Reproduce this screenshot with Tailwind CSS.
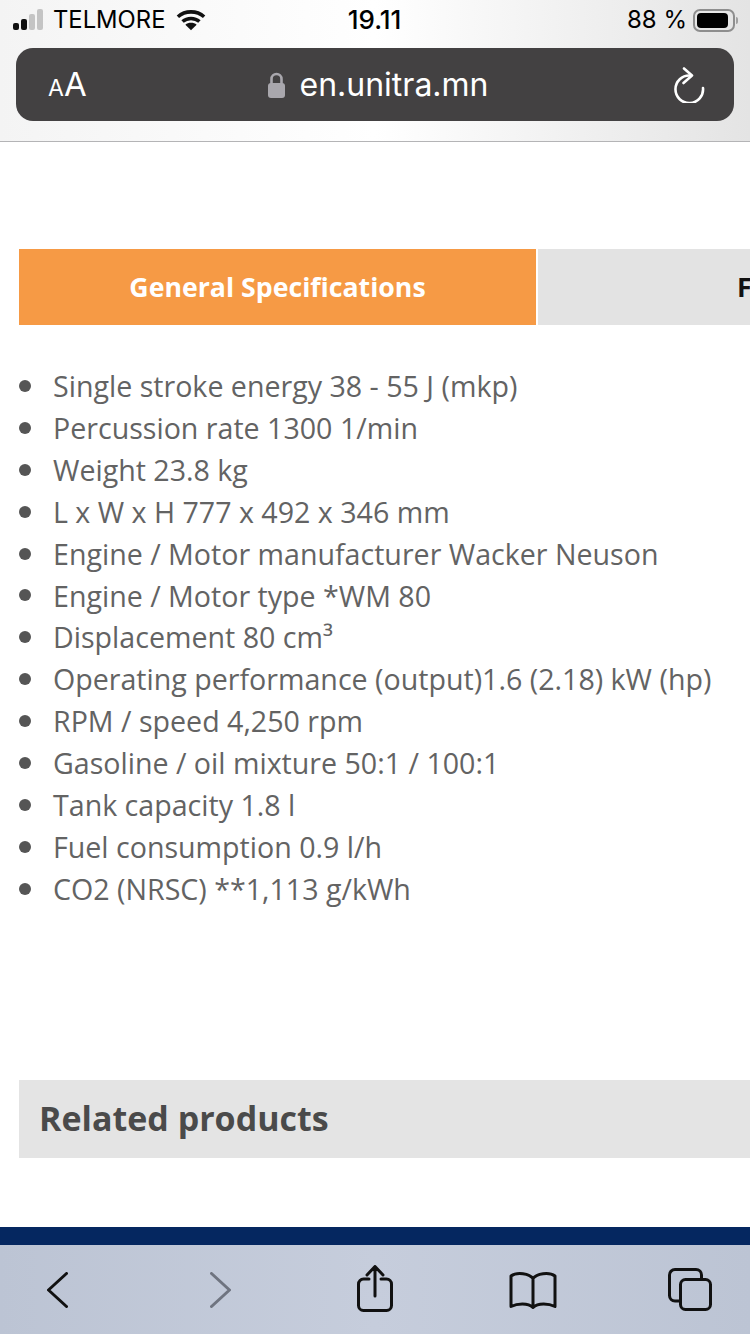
<!DOCTYPE html>
<html lang="en">
<head>
    <meta charset="UTF-8">
    <meta name="viewport" content="width=device-width, initial-scale=1.0">
    <script src="https://cdn.jsdelivr.net/npm/@tailwindcss/browser@4"></script>
    <title>en.unitra.mn</title>
</head>
<body class="bg-white">
<div class="w-[750px] h-[1334px] overflow-hidden flex flex-col font-['Open_Sans',sans-serif]">

    <!-- safari top bar -->
    <header class="h-[142px] shrink-0 border-b border-[#b4b4b6] bg-gradient-to-r from-[#f4f4f4] via-[#ffffff] to-[#e4e4e4] font-['Inter',sans-serif]">
        <div class="h-[40px] mb-[8px] pl-[13px] pr-[12px] grid grid-cols-3 items-center text-black">
            <div class="flex items-center">
                <div class="flex items-end gap-[2px] h-[21px]">
                    <span class="w-[6px] h-[7px] rounded-[2px] bg-[#111]"></span>
                    <span class="w-[6px] h-[11px] rounded-[2px] bg-[#111]"></span>
                    <span class="w-[6px] h-[16px] rounded-[2px] bg-[#c4c4c4]"></span>
                    <span class="w-[6px] h-[21px] rounded-[2px] bg-[#c4c4c4]"></span>
                </div>
                <span class="ml-[10px] text-[23.800px] leading-none">TELMORE</span>
                <svg class="ml-[11px]" width="30" height="22" viewBox="0 0 32 22" fill="none" stroke="#111" stroke-width="3.800">
                    <path d="M2 7.500C9.800.6 22.200.6 30 7.500"/>
                    <path d="M7 12.600c5-4.400 13-4.400 18 0"/>
                    <path d="M16 22l-6-6c3-2.800 9-2.800 12 0z" fill="#111" stroke="none"/>
                </svg>
            </div>
            <div class="text-center text-[26px] leading-none font-medium pr-[2px]">19.11</div>
            <div class="flex items-center justify-end">
                <span class="text-[24px] leading-none">88 %</span>
                <div class="ml-[6px] w-[42px] h-[23px] rounded-[7px] border-2 border-[#8e8e8e] p-[2px]">
                    <div class="w-[31px] h-full rounded-[4px] bg-black"></div>
                </div>
                <span class="ml-[1px] w-[2px] h-[7px] rounded-r bg-[#a0a0a0]"></span>
            </div>
        </div>
        <div class="mx-[16px] h-[73px] rounded-[17px] bg-[#434142] flex items-center justify-between pl-[32px] pr-[29px]">
            <div class="text-white leading-none flex items-baseline w-[34px] shrink-0">
                <span class="text-[23px]">A</span><span class="text-[33px]">A</span>
            </div>
            <div class="flex items-center text-[32px] leading-none text-white">
                <svg class="mr-[14px]" width="19" height="26" viewBox="0 0 19 26" fill="none">
                    <path d="M4.500 12V7a5 5 0 0 1 10 0v5" stroke="#a9a7ad" stroke-width="2.600"/>
                    <rect x="1" y="11" width="17" height="15" rx="3" fill="#a9a7ad"/>
                </svg>
                <span>en.unitra.mn</span>
            </div>
            <svg width="32" height="36" viewBox="0 0 32 36" fill="none" stroke="#fff" stroke-width="2.600" stroke-linecap="round" stroke-linejoin="round">
                <path d="M17 8.500A13.800 13.800 0 1 0 30 21"/>
                <path d="M11 1.500l8 7-8.500 7.500"/>
            </svg>
        </div>
    </header>

    <main class="flex-1 min-h-0 pl-[19px] pt-[107px]">
        <div class="flex h-[76px]">
            <div class="w-[517px] shrink-0 bg-[#f69a45] flex items-center justify-center text-white text-[26.700px] font-bold">General Specifications</div>
            <div class="flex-1 ml-[2px] bg-[#e3e3e3] flex items-center pl-[199px] text-[#111] text-[26.700px] font-bold overflow-hidden">F</div>
        </div>

        <ul class="mt-[40px] text-[#636363] text-[28.600px] leading-[41.9px]">
            <li class="flex items-center"><span class="w-[12px] h-[12px] rounded-full bg-[#555] mr-[22px]"></span>Single stroke energy 38 - 55 J (mkp)</li>
            <li class="flex items-center"><span class="w-[12px] h-[12px] rounded-full bg-[#555] mr-[22px]"></span>Percussion rate 1300 1/min</li>
            <li class="flex items-center"><span class="w-[12px] h-[12px] rounded-full bg-[#555] mr-[22px]"></span>Weight 23.8 kg</li>
            <li class="flex items-center"><span class="w-[12px] h-[12px] rounded-full bg-[#555] mr-[22px]"></span>L x W x H 777 x 492 x 346 mm</li>
            <li class="flex items-center"><span class="w-[12px] h-[12px] rounded-full bg-[#555] mr-[22px]"></span>Engine / Motor manufacturer Wacker Neuson</li>
            <li class="flex items-center"><span class="w-[12px] h-[12px] rounded-full bg-[#555] mr-[22px]"></span>Engine / Motor type *WM 80</li>
            <li class="flex items-center"><span class="w-[12px] h-[12px] rounded-full bg-[#555] mr-[22px]"></span>Displacement 80 cm³</li>
            <li class="flex items-center"><span class="w-[12px] h-[12px] rounded-full bg-[#555] mr-[22px]"></span>Operating performance (output)1.6 (2.18) kW (hp)</li>
            <li class="flex items-center"><span class="w-[12px] h-[12px] rounded-full bg-[#555] mr-[22px]"></span>RPM / speed 4,250 rpm</li>
            <li class="flex items-center"><span class="w-[12px] h-[12px] rounded-full bg-[#555] mr-[22px]"></span>Gasoline / oil mixture 50:1 / 100:1</li>
            <li class="flex items-center"><span class="w-[12px] h-[12px] rounded-full bg-[#555] mr-[22px]"></span>Tank capacity 1.8 l</li>
            <li class="flex items-center"><span class="w-[12px] h-[12px] rounded-full bg-[#555] mr-[22px]"></span>Fuel consumption 0.9 l/h</li>
            <li class="flex items-center"><span class="w-[12px] h-[12px] rounded-full bg-[#555] mr-[22px]"></span>CO2 (NRSC) **1,113 g/kWh</li>
        </ul>

        <div class="mt-[170px] h-[78px] bg-[#e4e4e4] flex items-center pl-[20px] text-[34px] font-bold text-[#4a4a4a]">Related products</div>
    </main>

    <div class="h-[18px] shrink-0 bg-[#052760]"></div>

    <!-- safari bottom toolbar -->
    <nav class="h-[89px] shrink-0 bg-gradient-to-r from-[#bcc4d4] via-[#c6cddc] to-[#bcc4d4] flex items-center pl-[47px]">
        <svg width="21" height="36" viewBox="0 0 21 36" fill="none" stroke="#111" stroke-width="3" stroke-linecap="round" stroke-linejoin="round"><path d="M19.500 1.500L1.500 18l18 16.500"/></svg>
        <svg class="ml-[142px]" width="21" height="36" viewBox="0 0 21 36" fill="none" stroke="#6f7480" stroke-width="3" stroke-linecap="round" stroke-linejoin="round"><path d="M1.500 1.500l18 16.500-18 16.500"/></svg>
        <svg class="ml-[126px] -mt-[2px]" width="36" height="47" viewBox="0 0 36 47" fill="none" stroke="#111" stroke-width="3" stroke-linecap="round" stroke-linejoin="round">
            <path d="M12 14H6.500a5 5 0 0 0-5 5v21.500a5 5 0 0 0 5 5h23a5 5 0 0 0 5-5V19a5 5 0 0 0-5-5H24"/>
            <path d="M18 31V2M10 10l8-8.500 8 8.500"/>
        </svg>
        <svg class="ml-[116px]" width="48" height="38" viewBox="0 0 48 38" fill="none" stroke="#111" stroke-width="3" stroke-linecap="round" stroke-linejoin="round">
            <path d="M24 7.500C20.500 2.500 8 .5 2 5v30.500c6-3 17-4 22 1 5-5 16-4 22-1V5C40 .5 27.500 2.500 24 7.500zM24 7.500v29"/>
        </svg>
        <svg class="ml-[111px]" width="44" height="43" viewBox="0 0 44 43" fill="none" stroke="#111" stroke-width="3" stroke-linejoin="round">
            <path d="M11.500 33H7a5.500 5.500 0 0 1-5.500-5.500V7A5.500 5.500 0 0 1 7 1.500h21A5.500 5.500 0 0 1 33.500 7v3"/>
            <rect x="12.500" y="11.500" width="30" height="30" rx="5"/>
        </svg>
    </nav>
</div>
</body>
</html>
